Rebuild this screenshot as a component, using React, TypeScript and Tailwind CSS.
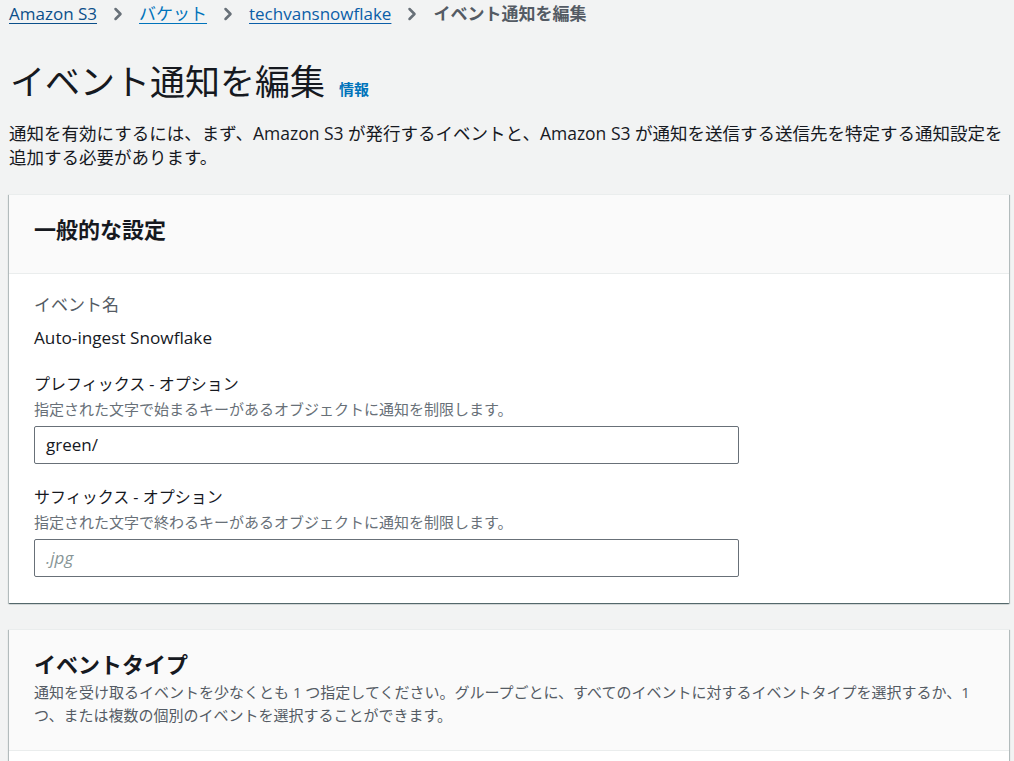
import { ChevronRight } from "lucide-react";

const font = {
    fontFamily: '"Open Sans", "Noto Sans CJK JP", sans-serif',
};

const crumbs = [
    { label: "Amazon S3", color: "text-[#0b4f8a]" },
    { label: "バケット", color: "text-[#0073bb]" },
    { label: "techvansnowflake", color: "text-[#0b5ea8]" },
];

const Sep = () => (
    <ChevronRight className="mx-[11px] h-[20px] w-[20px] text-[#687078]" strokeWidth={3} />
);

const Field = ({
    label,
    hint,
    value,
    placeholder,
}: {
    label: string;
    hint: string;
    value?: string;
    placeholder?: string;
}) => (
    <div>
        <div className="text-[16px] leading-[24px] text-[#16191f]">{label}</div>
        <div className="mt-[3px] text-[15px] leading-[20px] text-[#687078]">{hint}</div>
        <div className="mt-[7px] flex h-[38px] w-[705px] items-center rounded-[2px] border border-[#687078] bg-white px-[11px] text-[17px]">
            {value ? (
                <span className="text-[#16191f]">{value}</span>
            ) : (
                <span className="italic text-[#879596]">{placeholder}</span>
            )}
        </div>
    </div>
);

const cardShadow =
    "shadow-[0_1px_1px_0_rgba(0,28,36,0.45),1px_1px_1px_0_rgba(0,28,36,0.2),-1px_1px_1px_0_rgba(0,28,36,0.2)]";

export default function App() {
    return (
        <div className="min-h-screen bg-[#f2f3f3] pl-[9px] pr-[5px] text-[#16191f]" style={font}>
            <nav className="flex h-[28px] items-center text-[17px]">
                {crumbs.map((c) => (
                    <span key={c.label} className="flex items-center">
                        <a className={`underline underline-offset-[3px] ${c.color}`}>{c.label}</a>
                        <Sep />
                    </span>
                ))}
                <span className="font-bold text-[#545b64]">イベント通知を編集</span>
            </nav>

            <div className="mt-[34px] flex items-baseline">
                <h1 className="pl-[1px] text-[35px] leading-[40px] font-normal">イベント通知を編集</h1>
                <a className="ml-[14px] text-[15px] font-bold text-[#0073bb]">情報</a>
            </div>

            <p className="mt-[19px] text-[17.5px] leading-[24px] text-[#16191f]">
                通知を有効にするには、まず、Amazon S3 が発行するイベントと、Amazon S3 が通知を送信する送信先を特定する通知設定を追加する必要があります。
            </p>

            <section className={`mt-[25px] border-t border-[#eaeded] bg-white ${cardShadow}`}>
                <div className="border-b border-[#eaeded] bg-[#fafafa] px-[25px] pt-[20px] pb-[30px]">
                    <h2 className="text-[22px] leading-[28px] font-bold">一般的な設定</h2>
                </div>
                <div className="px-[25px] pt-[19px] pb-[26px]">
                    <div className="text-[17px] leading-[24px] text-[#545b64]">イベント名</div>
                    <div className="mt-[9px] text-[17.2px] leading-[24px]">Auto-ingest Snowflake</div>
                    <div className="mt-[22px]">
                        <Field
                            label="プレフィックス - オプション"
                            hint="指定された文字で始まるキーがあるオブジェクトに通知を制限します。"
                            value="green/"
                        />
                    </div>
                    <div className="mt-[21px]">
                        <Field
                            label="サフィックス - オプション"
                            hint="指定された文字で終わるキーがあるオブジェクトに通知を制限します。"
                            placeholder=".jpg"
                        />
                    </div>
                </div>
            </section>

            <section className={`mt-[26px] border-t border-[#eaeded] bg-white ${cardShadow}`}>
                <div className="border-b border-[#eaeded] bg-[#fafafa] px-[25px] pt-[20px] pb-[23px]">
                    <h2 className="text-[22px] leading-[28px] font-bold">イベントタイプ</h2>
                    <p className="mt-[3px] text-[15px] leading-[23px] text-[#545b64]">
                        通知を受け取るイベントを少なくとも 1 つ指定してください。グループごとに、すべてのイベントに対するイベントタイプを選択するか、1 つ、または複数の個別のイベントを選択することができます。
                    </p>
                </div>
                <div className="h-[60px]" />
            </section>
        </div>
    );
}
